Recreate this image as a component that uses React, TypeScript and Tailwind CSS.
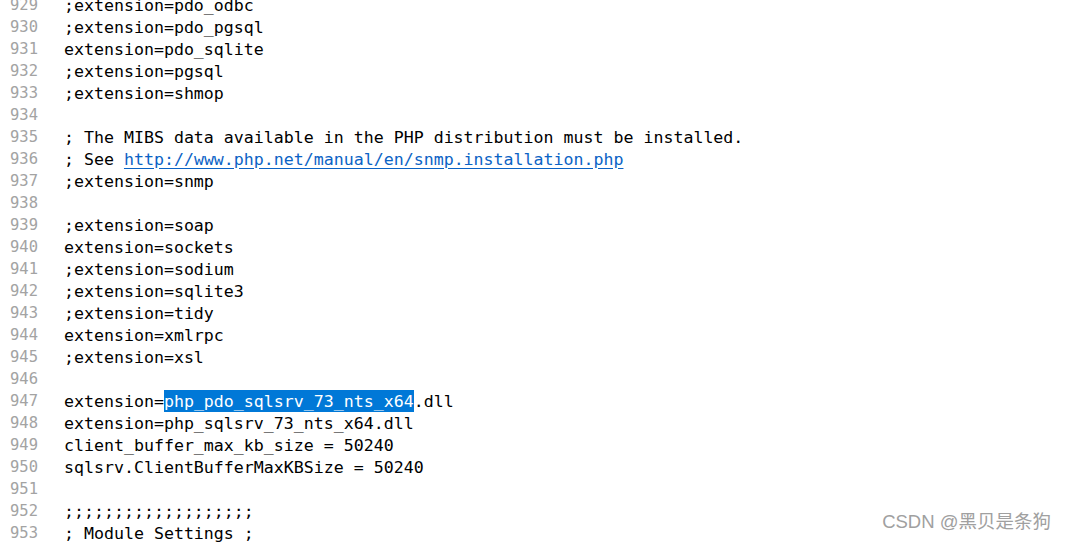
import React from 'react';

type Line = { n: number; text?: string; kind?: 'link' | 'select' };

const lines: Line[] = [
  { n: 929, text: ';extension=pdo_odbc' },
  { n: 930, text: ';extension=pdo_pgsql' },
  { n: 931, text: 'extension=pdo_sqlite' },
  { n: 932, text: ';extension=pgsql' },
  { n: 933, text: ';extension=shmop' },
  { n: 934 },
  { n: 935, text: '; The MIBS data available in the PHP distribution must be installed.' },
  { n: 936, kind: 'link' },
  { n: 937, text: ';extension=snmp' },
  { n: 938 },
  { n: 939, text: ';extension=soap' },
  { n: 940, text: 'extension=sockets' },
  { n: 941, text: ';extension=sodium' },
  { n: 942, text: ';extension=sqlite3' },
  { n: 943, text: ';extension=tidy' },
  { n: 944, text: 'extension=xmlrpc' },
  { n: 945, text: ';extension=xsl' },
  { n: 946 },
  { n: 947, kind: 'select' },
  { n: 948, text: 'extension=php_sqlsrv_73_nts_x64.dll' },
  { n: 949, text: 'client_buffer_max_kb_size = 50240' },
  { n: 950, text: 'sqlsrv.ClientBufferMaxKBSize = 50240' },
  { n: 951 },
  { n: 952, text: ';'.repeat(19) },
  { n: 953, text: '; Module Settings ;' },
];

const CodeLine = ({ line }: { line: Line }) => {
  let body: React.ReactNode = line.text ?? '';
  if (line.kind === 'link') {
    body = (
      <>
        ; See{' '}
        <span className="text-[#0b63c5] underline underline-offset-[3px]">
          http://www.php.net/manual/en/snmp.installation.php
        </span>
      </>
    );
  }
  if (line.kind === 'select') {
    body = (
      <>
        extension=<span className="bg-[#0078d7] text-white inline-block h-[22px]">php_pdo_sqlsrv_73_nts_x64</span>.dll
      </>
    );
  }
  return (
    <div className="flex h-[22px] items-center whitespace-pre">
      <span className="w-[64px] shrink-0 pl-[10px] text-[15.5px] text-[#a3a3a3]">{line.n}</span>
      <span className="text-[16.6px] text-black">{body}</span>
    </div>
  );
};

export default function App() {
  return (
    <div className="relative w-[1066px] h-[545px] overflow-hidden bg-white font-['DejaVu_Sans_Mono',monospace]">
      <div className="flex flex-col -mt-[5px]">
        {lines.map((line) => (
          <CodeLine key={line.n} line={line} />
        ))}
      </div>
      <div className="absolute right-[15px] bottom-[9px] text-[18.5px] text-[#a0a0a0] font-['Liberation_Sans','Noto_Sans_CJK_SC',sans-serif] [text-shadow:0_0_2px_#fff]">
        CSDN @黑贝是条狗
      </div>
    </div>
  );
}
